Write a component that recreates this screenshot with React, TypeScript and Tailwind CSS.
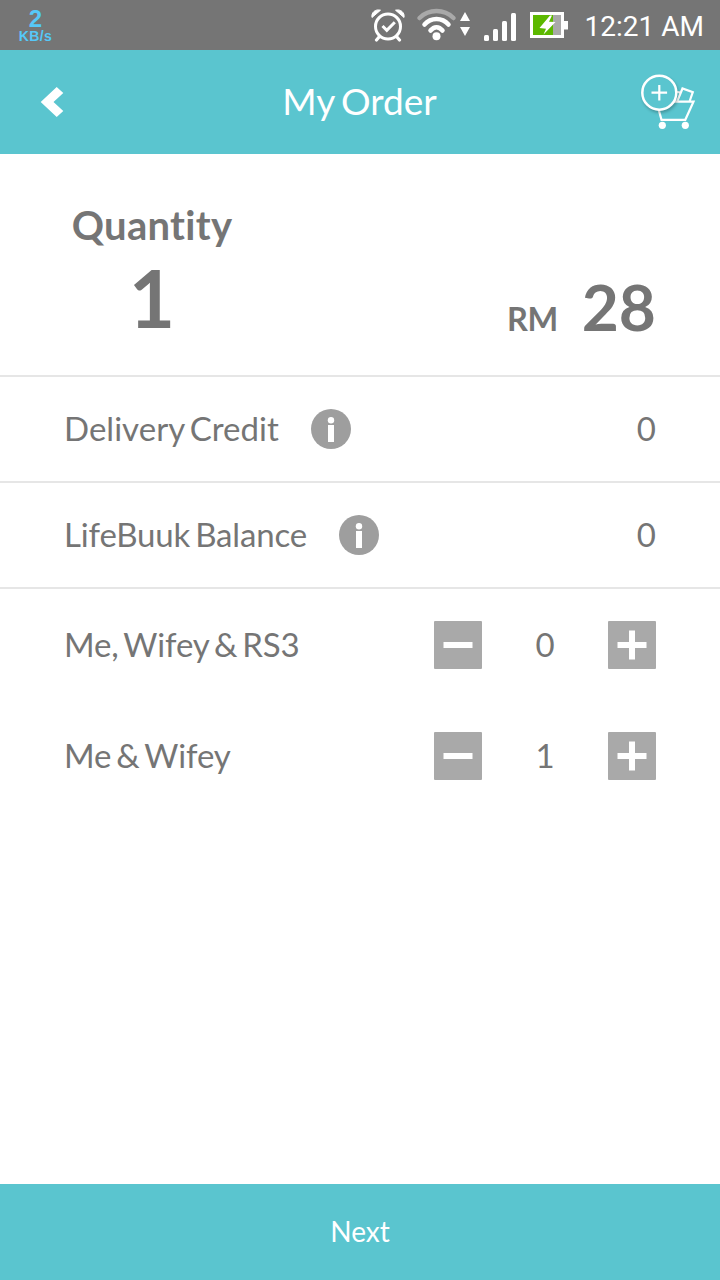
import { useState } from "react";

function StatusBar() {
  return (
    <div className="flex h-[50px] shrink-0 items-center bg-[#757575] pl-[18px] pr-4">
      <div className="flex w-[35px] flex-col items-center pt-[2px] font-['Liberation_Sans',Arial,sans-serif] font-bold text-[#56c8f8]">
        <span className="text-[24px] leading-[20px]">2</span>
        <span className="text-[14px] leading-[15px] tracking-[0.4px]">KB/s</span>
      </div>
      <AlarmIcon />
      <WifiIcon />
      <SignalIcon />
      <BatteryIcon />
      <span className="ml-[15px] w-[120px] whitespace-nowrap pt-[3px] text-right font-[Roboto,sans-serif] text-[28px] leading-[47px] text-white">
        12:21 AM
      </span>
    </div>
  );
}

function AlarmIcon() {
  return (
    <svg width="34" height="34" viewBox="0 0 34 34" fill="none" stroke="white" className="ml-auto">
      <circle cx="17" cy="18.5" r="12.5" strokeWidth="3" />
      <path d="M8.5 28.5 5.5 32M25.5 28.5l3 3.5" strokeWidth="3.2" strokeLinecap="round" />
      <path d="m11.5 18 4.3 4.3 8-8" strokeWidth="3" />
      <path d="M1 9.5C0 4.5 4.5 .8 9.5 2.2ZM33 9.5C34 4.5 29.5 .8 24.5 2.2Z" fill="white" strokeWidth="1" />
    </svg>
  );
}

function WifiIcon() {
  return (
    <svg width="56" height="34" viewBox="0 0 56 34" fill="none" stroke="white" strokeLinecap="round" className="ml-[10px]">
      <path d="M4.5 10C14 .8 29 .8 38.5 10" stroke="#a9a9a9" strokeWidth="4.5" />
      <path d="M9.5 16.5c6.5-7.5 17.5-7.5 24 0" strokeWidth="4.5" />
      <path d="M15.5 22.5c3.500-4.500 8.500-4.500 12 0" strokeWidth="4.5" />
      <circle cx="21.5" cy="28.3" r="4" fill="white" stroke="none" />
      <path d="M50 4l5 9H45ZM45 19h10l-5 9Z" fill="white" stroke="none" />
    </svg>
  );
}

function SignalIcon() {
  return (
    <svg width="34" height="34" viewBox="0 0 34 34" fill="white" className="ml-3">
      <rect x="1" y="27" width="5" height="6" rx="1.5" />
      <rect x="10" y="21" width="5" height="12" rx="1.5" />
      <rect x="19" y="13" width="5" height="20" rx="1.5" />
      <rect x="28" y="5" width="5" height="28" rx="1.5" />
    </svg>
  );
}

function BatteryIcon() {
  return (
    <svg width="40" height="34" viewBox="0 0 40 34" className="ml-3">
      <path d="M1 4h34v9h4v8.500h-4V30H1Z" fill="white" />
      <path d="M4 7h20v20H4Z" fill="#5cb800" />
      <path d="M24 7h8v20h-8Z" fill="#a9a9a9" />
      <path d="M21 7.500 10.500 20l6.500.8L14.500 26.500 26.500 14l-6.500-.3 3-6.200Z" fill="white" />
    </svg>
  );
}

function CartIcon() {
  return (
    <svg width="58" height="58" viewBox="0 0 58 58" fill="none" stroke="white" strokeWidth="2.2">
      <path d="M34 28.7h19.5L45.3 46.8H21.5L18.5 36" />
      <path d="M37.3 28 42.5 15.5l10.3 3.7L49.7 28M35 18.5l5 1" />
      <circle cx="22.3" cy="52.3" r="3.6" fill="white" stroke="none" />
      <circle cx="45.3" cy="52.3" r="3.6" fill="white" stroke="none" />
      <circle
        cx="19.3"
        cy="19.7"
        r="17"
        fill="#5ac5cf"
        strokeWidth="2.5"
        className="drop-shadow-[1px_2px_1.5px_rgba(0,0,0,0.25)]"
      />
      <path d="M11.5 19.7h15.6M19.3 12v15.5" />
    </svg>
  );
}

function Header() {
  return (
    <header className="flex h-[104px] shrink-0 items-center justify-between bg-[#5ac5cf] pl-10 pr-[22px] text-white">
      <button className="w-[39px]" aria-label="Back">
        <svg width="24" height="32" viewBox="0 0 24 32" fill="white">
          <path d="M16.7 1l6.6 6-9.8 9 9.8 9-6.6 6L.7 16Z" />
        </svg>
      </button>
      <h1 className="pb-[2px] text-[37px] leading-[102px] [word-spacing:-3px]">My Order</h1>
      <button aria-label="Add to cart">
        <CartIcon />
      </button>
    </header>
  );
}

function InfoIcon() {
  return (
    <svg width="40" height="40" viewBox="0 0 40 40" fill="white">
      <circle cx="20" cy="20" r="20" fill="#9e9e9e" />
      <circle cx="20" cy="11.3" r="3.2" />
      <path d="M17 16h6v17h-6Z" />
    </svg>
  );
}

interface CreditRowProps {
  label: string;
  value: number;
  labelClass: string;
}

function CreditRow({ label, value, labelClass }: CreditRowProps) {
  return (
    <div className="flex h-[106px] items-center border-b-2 border-[#e6e6e6] px-16">
      <span className={labelClass}>{label}</span>
      <span className="ml-8">
        <InfoIcon />
      </span>
      <span className="ml-auto">{value}</span>
    </div>
  );
}

interface StepperRowProps {
  label: string;
  value: number;
  onChange: (value: number) => void;
}

function StepperRow({ label, value, onChange }: StepperRowProps) {
  return (
    <div className="flex h-[111px] items-center px-16">
      <span className="mr-auto tracking-[-0.1px] [word-spacing:-3.4px]">{label}</span>
      <button
        aria-label="Remove one"
        onClick={() => onChange(Math.max(0, value - 1))}
        className="flex size-12 items-center justify-center rounded-[1px] bg-[#a9a9a9]"
      >
        <svg width="30" height="30" viewBox="0 0 30 30" fill="white">
          <path d="M0.5 12h29v6h-29Z" />
        </svg>
      </button>
      <span className="w-[126px] text-center">{value}</span>
      <button
        aria-label="Add one"
        onClick={() => onChange(value + 1)}
        className="flex size-12 items-center justify-center rounded-[1px] bg-[#a9a9a9]"
      >
        <svg width="30" height="30" viewBox="0 0 30 30" fill="white">
          <path d="M0.5 12h29v6h-29ZM12 0.5h6v29h-6Z" />
        </svg>
      </button>
    </div>
  );
}

export default function App() {
  const [family, setFamily] = useState(0);
  const [couple, setCouple] = useState(1);
  const quantity = family + couple;

  return (
    <div className="flex h-[1280px] w-[720px] flex-col overflow-hidden bg-white font-[Lato,sans-serif] text-[33px] text-[#757575]">
      <StatusBar />
      <Header />

      <section className="flex h-[223px] shrink-0 items-end justify-between border-b-2 border-[#e6e6e6] px-16 font-bold">
        <div className="flex w-[176px] flex-col items-center pb-[30px]">
          <span className="text-[40px] leading-[48px] tracking-[0.3px] [font-variant-ligatures:none]">Quantity</span>
          <span className="text-[80px] leading-[96px]">{quantity}</span>
        </div>
        <div className="flex items-baseline gap-6 pb-[29px]">
          <span className="text-[32.5px] tracking-[-0.4px]">RM</span>
          <span className="text-[64px] leading-[78px]">{quantity * 28}</span>
        </div>
      </section>

      <CreditRow label="Delivery Credit" value={0} labelClass="tracking-[0.03px] [word-spacing:-3.2px]" />
      <CreditRow label="LifeBuuk Balance" value={0} labelClass="tracking-[-0.16px] [word-spacing:-3.2px]" />
      <StepperRow label="Me, Wifey & RS3" value={family} onChange={setFamily} />
      <StepperRow label="Me & Wifey" value={couple} onChange={setCouple} />

      <button className="mt-auto h-24 shrink-0 bg-[#5ac5cf] pb-[2px] text-[28px] text-white">Next</button>
    </div>
  );
}
